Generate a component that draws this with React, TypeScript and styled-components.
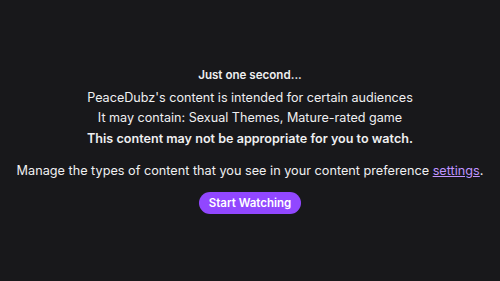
import styled, { createGlobalStyle } from "styled-components";

const GlobalStyle = createGlobalStyle`
    html, body {
        margin: 0;
        padding: 0;
        background: #18181b;
        height: 100%;
    }
    #root {
        height: 100%;
    }
`

export default function App() {
    return (
        <>
            <GlobalStyle />
            <Gate>
                <Warning>
                    <Title>Just one second...</Title>
                    <Line>PeaceDubz's content is intended for certain audiences</Line>
                    <Line>It may contain: Sexual Themes, Mature-rated game</Line>
                    <Strong>This content may not be appropriate for you to watch.</Strong>
                </Warning>
                <Manage>
                    Manage the types of content that you see in your content preference <SettingsLink href="#">settings</SettingsLink>.
                </Manage>
                <StartButton>Start Watching</StartButton>
            </Gate>
        </>
    )
}

const Gate = styled.div`
    height: 281px;
    box-sizing: border-box;
    padding-bottom: 2px;
    display: flex;
    flex-direction: column;
    align-items: center;
    justify-content: center;
    font-family: Inter, "Noto Sans", sans-serif;
    color: #efeff1;
    text-align: center;
`

const Warning = styled.div`
    display: flex;
    flex-direction: column;
    align-items: center;
`

const Title = styled.p`
    margin: 0 0 3px 0;
    font-size: 11.6px;
    font-weight: 600;
    line-height: 20px;
`

const Line = styled.p`
    margin: 0;
    font-size: 12.6px;
    line-height: 20.5px;
`

const Strong = styled(Line)`
    font-weight: 600;
`

const Manage = styled.p`
    margin: 12px 0 0 0;
    font-size: 12.7px;
    line-height: 20px;
`

const SettingsLink = styled.a`
    color: #bf94ff;
    text-decoration: underline;
`

const StartButton = styled.button`
    margin-top: 11px;
    height: 22px;
    padding: 0 10px;
    border: none;
    border-radius: 11px;
    background: #9147ff;
    color: #ffffff;
    font-family: Inter, "Noto Sans", sans-serif;
    font-size: 11.5px;
    font-weight: 600;
    cursor: pointer;
`
